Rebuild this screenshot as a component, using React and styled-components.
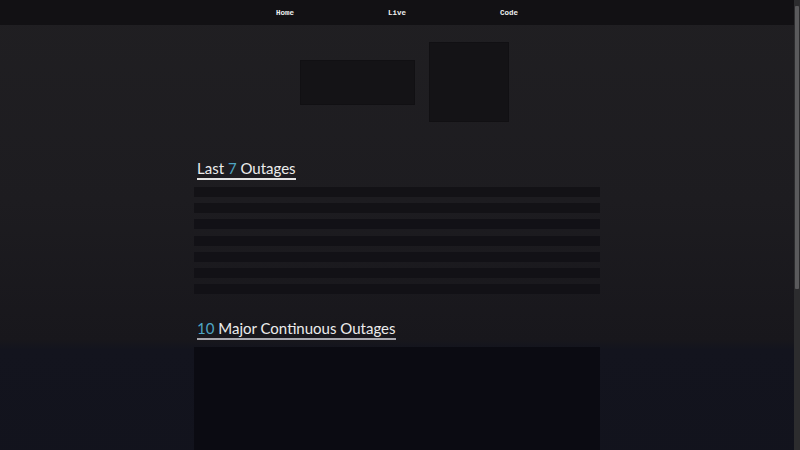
import React from 'react';
import styled, { createGlobalStyle } from 'styled-components';

const GlobalStyle = createGlobalStyle`
  html, body {
    margin: 0;
    padding: 0;
  }

  body {
    background: linear-gradient(
      180deg,
      #201f22 0px,
      #1d1c20 200px,
      #18171c 340px,
      #13141e 350px,
      #10111a 715px
    );
    background-color: #10111a;
    min-height: 715px;
    font-family: Lato, 'Open Sans', sans-serif;
  }
`

const Page = styled.div`
  margin-right: 6px;
`

const Scrollbar = styled.div`
  position: fixed;
  top: 0;
  right: 0;
  width: 6px;
  height: 100vh;
  background-color: #2c2c2e;
  display: flex;
  flex-direction: column;
  padding: 4px 0;
  box-sizing: border-box;
`

const Thumb = styled.div`
  margin: 2px 1px 0;
  height: 283px;
  background-color: #5a5a5c;
  border-radius: 1px;
`

const Nav = styled.nav`
  height: 25px;
  background-color: #121114;
  display: flex;
  justify-content: center;
  align-items: center;
`

const NavLink = styled.a`
  width: 112px;
  text-align: center;
  font-family: 'Liberation Mono', 'DejaVu Sans Mono', monospace;
  font-weight: bold;
  font-size: 7.5px;
  color: #f0f0f0;
  text-decoration: none;
  cursor: pointer;
`

const Hero = styled.div`
  display: flex;
  justify-content: center;
  align-items: center;
  gap: 14px;
  padding: 17px 0 0 15px;
`

const Placeholder = styled.div`
  width: ${(p) => p.w}px;
  height: ${(p) => p.h}px;
  background-color: #141316;
  border: 1px solid #111013;
  box-sizing: border-box;
`

const Main = styled.main`
  width: 406px;
  margin: 0 auto;
  padding-top: 35px;
`

const Heading = styled.h2`
  display: inline-block;
  margin: 0 0 7px 3px;
  padding-top: 2px;
  font-weight: 400;
  font-size: 15px;
  line-height: 19px;
  color: #ececec;
  border-bottom: 2px solid ${(p) => p.line};
`

const Num = styled.span`
  color: #4ea5c4;
`

const OutageList = styled.ul`
  list-style: none;
  margin: 0 0 23px;
  padding: 0;
  display: flex;
  flex-direction: column;
  gap: 6.2px;
`

const OutageRow = styled.li`
  height: 10px;
  background-color: ${(p) => (p.dim ? '#121116' : '#131216')};
`

const Chart = styled.div`
  height: 355px;
  background-color: #0b0b12;
`

const App = () => {
  const rows = [0, 1, 2, 3, 4, 5, 6];

  return (
    <>
      <GlobalStyle />
      <Page>
        <Nav>
          <NavLink>Home</NavLink>
          <NavLink>Live</NavLink>
          <NavLink>Code</NavLink>
        </Nav>
        <Hero>
          <Placeholder w={115} h={45} />
          <Placeholder w={80} h={80} />
        </Hero>
        <Main>
          <Heading line="#e4e4e4">
            Last <Num>7</Num> Outages
          </Heading>
          <OutageList>
            {rows.map((r) => (
              <OutageRow key={r} dim={r > 1} />
            ))}
          </OutageList>
          <Heading line="#a8a8ae">
            <Num>10</Num> Major Continuous Outages
          </Heading>
          <Chart />
        </Main>
      </Page>
      <Scrollbar>
        <Thumb />
      </Scrollbar>
    </>
  );
};

export default App;
